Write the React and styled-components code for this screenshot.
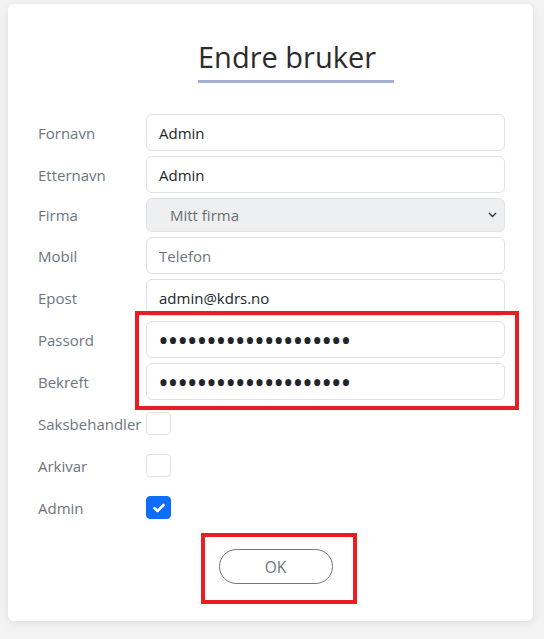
import React from 'react';
import styled, { createGlobalStyle } from 'styled-components';

const GlobalStyle = createGlobalStyle`
  html, body {
    margin: 0;
    padding: 0;
    background: #f3f3f3;
    font-family: "Open Sans", "Noto Sans", sans-serif;
  }
`;

const Page = styled.div`
  position: relative;
  width: 544px;
  height: 639px;
  padding: 4px 0 0 8px;
  box-sizing: border-box;
`;

const Card = styled.div`
  width: 525px;
  height: 617px;
  box-sizing: border-box;
  background: #fff;
  border-radius: 6px;
  box-shadow: 0 2px 10px rgba(0, 0, 0, 0.09);
  padding: 30px 28px 0 30px;
`;

const Header = styled.div`
  padding-left: 160px;
  margin-bottom: 31px;
`;

const Title = styled.h1`
  display: inline-block;
  margin: 0;
  width: 196px;
  box-sizing: border-box;
  font-size: 29px;
  font-weight: 400;
  line-height: 46px;
  color: #2b2b2b;
  border-bottom: 3px solid #a3afd3;
`;

const Row = styled.div`
  display: grid;
  grid-template-columns: 108px 359px;
  align-items: center;
  margin-bottom: ${(p) => p.$gap || 5}px;
  min-height: ${(p) => p.$h || 37}px;
`;

const Label = styled.label`
  font-size: 15px;
  color: #6c757d;
  white-space: nowrap;
`;

const Input = styled.input`
  box-sizing: border-box;
  width: 100%;
  height: 37px;
  padding: 0 12px;
  border: 1px solid #dee2e6;
  border-radius: 6px;
  font-family: inherit;
  font-size: 15px;
  color: #212529;
  background: #fff;
  outline: none;

  &::placeholder {
    color: #6c757d;
    opacity: 1;
  }
`;

const PasswordInput = styled(Input)`
  font-size: 29px;
  letter-spacing: -1.3px;
  padding-left: 11px;
`;

const SelectWrap = styled.div`
  position: relative;
`;

const Select = styled.select`
  appearance: none;
  box-sizing: border-box;
  width: 100%;
  height: 34px;
  padding: 0 36px 0 23px;
  border: 1px solid #d3d6dc;
  border-radius: 6px;
  background: #e8e9ec;
  font-family: inherit;
  font-size: 15px;
  color: #2b2f33;
`;

const Chevron = styled.svg`
  position: absolute;
  right: 8px;
  top: 14px;
  pointer-events: none;
`;

const Box = styled.span`
  display: flex;
  align-items: center;
  justify-content: center;
  width: 25px;
  height: 23px;
  box-sizing: border-box;
  border-radius: 4px;
  border: 1px solid ${(p) => (p.$checked ? '#0d6efd' : '#dee2e6')};
  background: ${(p) => (p.$checked ? '#0d6efd' : '#fff')};
`;

const Footer = styled.div`
  display: flex;
  justify-content: center;
  padding-left: 8px;
  margin-top: 30px;
`;

const OkButton = styled.button`
  width: 114px;
  height: 35px;
  border: 1px solid #6c757d;
  border-radius: 18px;
  background: #fff;
  color: #6c757d;
  font-family: inherit;
  font-size: 15.5px;
  cursor: pointer;
`;

const Marker = styled.div`
  position: absolute;
  box-sizing: border-box;
  border: 4.5px solid #ea1c24;
  pointer-events: none;
`;

const fields = [
  { label: 'Fornavn', value: 'Admin' },
  { label: 'Etternavn', value: 'Admin' },
];

const contact = [
  { label: 'Mobil', value: '', placeholder: 'Telefon' },
  { label: 'Epost', value: 'admin@kdrs.no' },
];

const roles = [
  { label: 'Saksbehandler', checked: false },
  { label: 'Arkivar', checked: false },
  { label: 'Admin', checked: true },
];

const Check = ({ checked }) => (
  <Box $checked={checked}>
    {checked && (
      <svg width="12" height="10" viewBox="0 0 12 10">
        <path d="M1.5 5.2 L4.5 8 L10.5 2" fill="none" stroke="#fff" strokeWidth="2.6" strokeLinecap="round" strokeLinejoin="round" />
      </svg>
    )}
  </Box>
);

export default function App() {
  return (
    <>
      <GlobalStyle />
      <Page>
        <Card>
          <Header>
            <Title>Endre bruker</Title>
          </Header>
          {fields.map((f) => (
            <Row key={f.label}>
              <Label>{f.label}</Label>
              <Input defaultValue={f.value} />
            </Row>
          ))}
          <Row $h={34}>
            <Label>Firma</Label>
            <SelectWrap>
              <Select defaultValue="mitt" disabled>
                <option value="mitt">Mitt firma</option>
              </Select>
              <Chevron width="9" height="6" viewBox="0 0 9 6">
                <path d="M1 1 L4.5 4.5 L8 1" fill="none" stroke="#343a40" strokeWidth="1.4" />
              </Chevron>
            </SelectWrap>
          </Row>
          {contact.map((f) => (
            <Row key={f.label}>
              <Label>{f.label}</Label>
              <Input defaultValue={f.value} placeholder={f.placeholder} />
            </Row>
          ))}
          <Row>
            <Label>Passord</Label>
            <PasswordInput type="password" defaultValue="aaaaaaaaaaaaaaaaaaaa" />
          </Row>
          <Row $gap={12}>
            <Label>Bekreft</Label>
            <PasswordInput type="password" defaultValue="aaaaaaaaaaaaaaaaaaaa" />
          </Row>
          {roles.map((r) => (
            <Row key={r.label} $h={23} $gap={19}>
              <Label>{r.label}</Label>
              <Check checked={r.checked} />
            </Row>
          ))}
          <Footer>
            <OkButton>OK</OkButton>
          </Footer>
        </Card>
        <Marker style={{ left: 135, top: 311, width: 384, height: 99 }} />
        <Marker style={{ left: 201, top: 533, width: 156, height: 71 }} />
      </Page>
    </>
  );
}
